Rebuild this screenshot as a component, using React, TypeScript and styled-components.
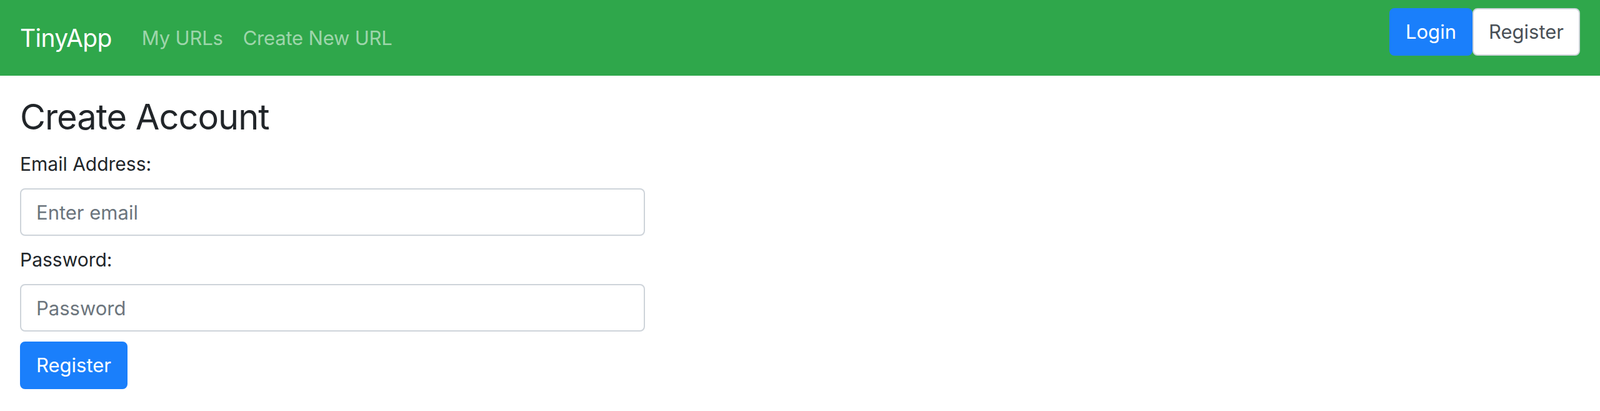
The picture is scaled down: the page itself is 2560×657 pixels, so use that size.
import React from "react";
import styled, { createGlobalStyle } from "styled-components";

const GlobalStyle = createGlobalStyle`
  html, body {
    margin: 0;
    padding: 0;
    background: #ffffff;
    font-family: Inter, "Noto Sans", "Liberation Sans", sans-serif;
    color: #212529;
  }
  * { box-sizing: border-box; }
`;

const Navbar = styled.nav`
  height: 121px;
  background: #2fa74b;
  display: flex;
  align-items: center;
  padding: 0 32px;
`;

const Brand = styled.a`
  font-size: 39px;
  letter-spacing: -0.6px;
  line-height: 60px;
  color: #ffffff;
  text-decoration: none;
  margin-right: 32px;
`;

const NavList = styled.ul`
  display: flex;
  list-style: none;
  margin: 0;
  padding: 0;
  flex: 1;
`;

const NavLink = styled.a`
  display: block;
  font-size: 31px;
  letter-spacing: -0.2px;
  line-height: 48px;
  padding: 0 16px;
  color: rgba(255, 255, 255, 0.55);
  text-decoration: none;
`;

const Actions = styled.form`
  display: flex;
  align-self: flex-start;
  margin: 13px 0 0;
`;

const Button = styled.button<{ $variant: "primary" | "outline" }>`
  height: 76px;
  padding: 0 24px;
  font-family: inherit;
  font-size: 31px;
  line-height: 48px;
  border-radius: 8px;
  cursor: pointer;
  border: 2px solid
    ${(p) => (p.$variant === "primary" ? "#1a7ffb" : "#ced4da")};
  background: ${(p) => (p.$variant === "primary" ? "#1a7ffb" : "#ffffff")};
  color: ${(p) => (p.$variant === "primary" ? "#ffffff" : "#495057")};
`;

const Main = styled.main`
  padding: 0 32px;
`;

const Heading = styled.h2`
  font-size: 56px;
  letter-spacing: -1px;
  font-weight: 400;
  line-height: 1.2;
  margin: 33px 0 19px;
  color: #212529;
`;

const Form = styled.form`
  display: flex;
  flex-direction: column;
  align-items: flex-start;
  max-width: 1000px;
`;

const FormGroup = styled.div`
  width: 100%;
  margin-bottom: 16px;
`;

const Label = styled.label`
  display: block;
  font-size: 30px;
  line-height: 45px;
  margin-bottom: 16px;
  color: #212529;
`;

const Input = styled.input`
  display: block;
  width: 100%;
  height: 76px;
  padding: 12px 24px;
  font-family: inherit;
  font-size: 31px;
  color: #495057;
  border: 2px solid #ced4da;
  border-radius: 8px;
  background: #ffffff;
  outline: none;
  &::placeholder {
    color: #6c757d;
  }
`;

export default function App() {
  return (
    <>
      <GlobalStyle />
      <Navbar>
        <Brand href="#">TinyApp</Brand>
        <NavList>
          <li>
            <NavLink href="#">My URLs</NavLink>
          </li>
          <li>
            <NavLink href="#">Create New URL</NavLink>
          </li>
        </NavList>
        <Actions onSubmit={(e) => e.preventDefault()}>
          <Button type="button" $variant="primary">
            Login
          </Button>
          <Button type="button" $variant="outline">
            Register
          </Button>
        </Actions>
      </Navbar>
      <Main>
        <Heading>Create Account</Heading>
        <Form onSubmit={(e) => e.preventDefault()}>
          <FormGroup>
            <Label htmlFor="email">Email Address:</Label>
            <Input id="email" type="email" placeholder="Enter email" />
          </FormGroup>
          <FormGroup>
            <Label htmlFor="password">Password:</Label>
            <Input id="password" type="password" placeholder="Password" />
          </FormGroup>
          <Button type="submit" $variant="primary">
            Register
          </Button>
        </Form>
      </Main>
    </>
  );
}
